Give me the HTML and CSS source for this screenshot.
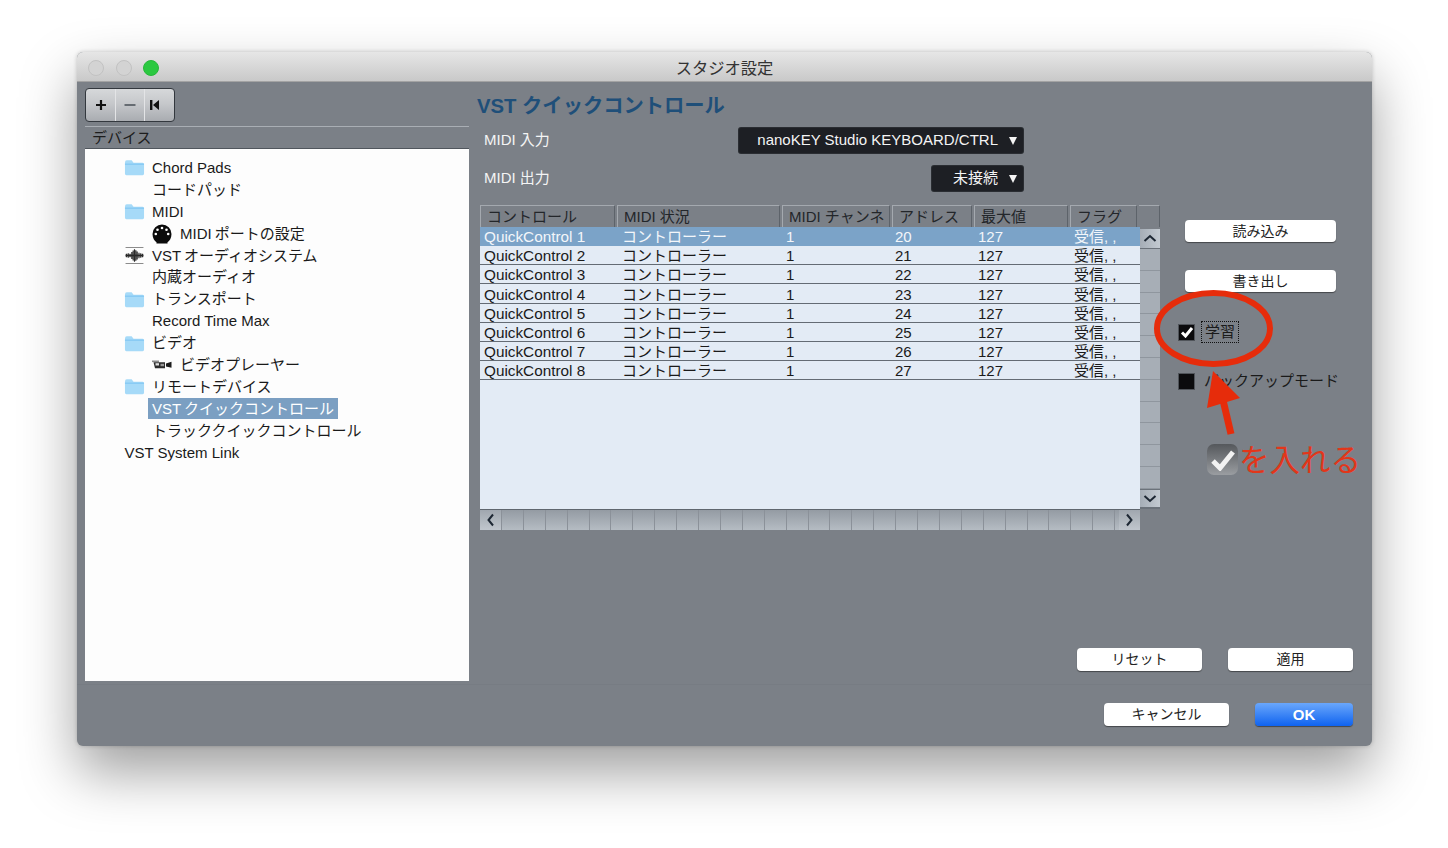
FILE: index.html
```html
<!DOCTYPE html>
<html lang="ja">
<head>
<meta charset="utf-8">
<title>スタジオ設定</title>
<link rel="stylesheet" href="styles.css">
</head>
<body>
<div class="window">
  <header class="titlebar">
    <div class="lights"><i class="light"></i><i class="light"></i><i class="light green"></i></div>
    <div class="wintitle">スタジオ設定</div>
  </header>
  <main class="content">
    <aside class="left">
      <div class="toolbar">
        <div class="tool first"><svg width="12" height="12" viewBox="0 0 12 12"><path d="M6 1v10M1 6h10" stroke="#111" stroke-width="2.2"/></svg></div>
        <div class="tool"><svg width="12" height="12" viewBox="0 0 12 12"><path d="M0.5 6h11" stroke="#666c72" stroke-width="2"/></svg></div>
        <div class="tool last"><svg width="11" height="12" viewBox="0 0 11 12"><path d="M1 1h2.4v10H1zM10 1v10L4 6z" fill="#111"/></svg></div>
      </div>
      <div class="treehead">デバイス</div>
      <div class="tree">
        <div class="node l1"><svg class="ficon" viewBox="0 0 22 17"><path d="M1 3.5Q1 1 3 1h5l2 2.4h9.5Q21 3.400 21 5v10q0 1.500-1.500 1.500h-17Q1 16.500 1 15z" fill="#a6daf8"/><path d="M1 5h20" stroke="#78c3f1" stroke-width="1"/></svg><span>Chord Pads</span></div>
        <div class="node l2"><span>コードパッド</span></div>
        <div class="node l1"><svg class="ficon" viewBox="0 0 22 17"><path d="M1 3.5Q1 1 3 1h5l2 2.4h9.5Q21 3.400 21 5v10q0 1.500-1.500 1.500h-17Q1 16.500 1 15z" fill="#a6daf8"/><path d="M1 5h20" stroke="#78c3f1" stroke-width="1"/></svg><span>MIDI</span></div>
        <div class="node l2"><svg class="iicon" viewBox="0 0 20 20"><path d="M10 .5a9.500 9.500 0 0 1 9.500 9.500c0 4-2 7-4 8.200V19.500h-11V18.200C2.500 17 .5 14 .5 10A9.500 9.500 0 0 1 10 .5z" fill="#0b0b0b"/><g fill="#fff"><circle cx="3.800" cy="10" r="1.300"/><circle cx="5.500" cy="5.800" r="1.300"/><circle cx="10" cy="4" r="1.300"/><circle cx="14.500" cy="5.800" r="1.300"/><circle cx="16.200" cy="10" r="1.300"/></g></svg><span class="tight">MIDI ポートの設定</span></div>
        <div class="node l1"><svg class="ficon" viewBox="0 0 20 19"><path d="M0 .5h20M0 18.500h20" stroke="#777" stroke-width="1"/><path d="M0 9.500h20" stroke="#222" stroke-width="2"/><path d="M1 7.500v4M3 7v5M5 7.500v4M7 5.500v8M8.500 4v11M10 2.500v14M11.500 3.500v12M13 5v9M15 6.500v6M17 7v5M19 7.500v4" stroke="#2a2a2a" stroke-width="1.300"/></svg><span class="tight">VST オーディオシステム</span></div>
        <div class="node l2"><span>内蔵オーディオ</span></div>
        <div class="node l1"><svg class="ficon" viewBox="0 0 22 17"><path d="M1 3.5Q1 1 3 1h5l2 2.4h9.5Q21 3.400 21 5v10q0 1.500-1.500 1.500h-17Q1 16.500 1 15z" fill="#a6daf8"/><path d="M1 5h20" stroke="#78c3f1" stroke-width="1"/></svg><span>トランスポート</span></div>
        <div class="node l2"><span>Record Time Max</span></div>
        <div class="node l1"><svg class="ficon" viewBox="0 0 22 17"><path d="M1 3.5Q1 1 3 1h5l2 2.4h9.5Q21 3.400 21 5v10q0 1.500-1.500 1.500h-17Q1 16.500 1 15z" fill="#a6daf8"/><path d="M1 5h20" stroke="#78c3f1" stroke-width="1"/></svg><span>ビデオ</span></div>
        <div class="node l2"><svg class="iicon cam" viewBox="0 0 20 9"><path d="M0 .5h7v1.600H0z" fill="#8a8a8a"/><path d="M1.500 2.200h11.500v6H3z" fill="#2b2b2b"/><path d="M3.500 3.200h3.500v2.300H3.500z" fill="#e0e0e0"/><path d="M8.500 3.800h3.500v2.400H8.500z" fill="#999"/><path d="M14 3.500L19.500 1.800v6L14 6.500z" fill="#1c1c1c"/></svg><span>ビデオプレーヤー</span></div>
        <div class="node l1"><svg class="ficon" viewBox="0 0 22 17"><path d="M1 3.5Q1 1 3 1h5l2 2.4h9.5Q21 3.400 21 5v10q0 1.500-1.500 1.500h-17Q1 16.500 1 15z" fill="#a6daf8"/><path d="M1 5h20" stroke="#78c3f1" stroke-width="1"/></svg><span>リモートデバイス</span></div>
        <div class="node l2"><span class="sel tight">VST クイックコントロール</span></div>
        <div class="node l2"><span>トラッククイックコントロール</span></div>
        <div class="node l0"><span>VST System Link</span></div>
      </div>
    </aside>
    <section class="right">
      <h1 class="heading">VST クイックコントロール</h1>
      <div class="midirow first"><span class="mlabel">MIDI 入力</span><div class="drop wide"><span>nanoKEY Studio KEYBOARD/CTRL</span><i class="tri"></i></div></div>
      <div class="midirow"><span class="mlabel">MIDI 出力</span><div class="drop"><span>未接続</span><i class="tri"></i></div></div>
      <div class="workarea">
        <div class="gridwrap">
          <div class="thead">
            <div class="th c1">コントロール</div><div class="th c2">MIDI 状況</div><div class="th c3">MIDI チャンネ</div><div class="th c4">アドレス</div><div class="th c5">最大値</div><div class="th c6">フラグ</div><div class="th c7"></div>
          </div>
          <div class="gridbody">
            <div class="rows">
              <div class="row active"><span class="c1">QuickControl 1</span><span class="c2">コントローラー</span><span class="c3">1</span><span class="c4">20</span><span class="c5">127</span><span class="c6">受信, ,</span></div>
              <div class="row"><span class="c1">QuickControl 2</span><span class="c2">コントローラー</span><span class="c3">1</span><span class="c4">21</span><span class="c5">127</span><span class="c6">受信, ,</span></div>
              <div class="row"><span class="c1">QuickControl 3</span><span class="c2">コントローラー</span><span class="c3">1</span><span class="c4">22</span><span class="c5">127</span><span class="c6">受信, ,</span></div>
              <div class="row"><span class="c1">QuickControl 4</span><span class="c2">コントローラー</span><span class="c3">1</span><span class="c4">23</span><span class="c5">127</span><span class="c6">受信, ,</span></div>
              <div class="row"><span class="c1">QuickControl 5</span><span class="c2">コントローラー</span><span class="c3">1</span><span class="c4">24</span><span class="c5">127</span><span class="c6">受信, ,</span></div>
              <div class="row"><span class="c1">QuickControl 6</span><span class="c2">コントローラー</span><span class="c3">1</span><span class="c4">25</span><span class="c5">127</span><span class="c6">受信, ,</span></div>
              <div class="row"><span class="c1">QuickControl 7</span><span class="c2">コントローラー</span><span class="c3">1</span><span class="c4">26</span><span class="c5">127</span><span class="c6">受信, ,</span></div>
              <div class="row"><span class="c1">QuickControl 8</span><span class="c2">コントローラー</span><span class="c3">1</span><span class="c4">27</span><span class="c5">127</span><span class="c6">受信, ,</span></div>
            </div>
            <div class="vscroll">
              <div class="arrow"><svg width="14" height="9" viewBox="0 0 14 9"><path d="M1.500 7L7 2l5.500 5" fill="none" stroke="#1d2733" stroke-width="2"/></svg></div>
              <div class="vtrack"></div>
              <div class="arrow"><svg width="14" height="9" viewBox="0 0 14 9"><path d="M1.500 2L7 7l5.500-5" fill="none" stroke="#1d2733" stroke-width="2"/></svg></div>
            </div>
          </div>
          <div class="hscroll">
            <div class="harrow"><svg width="9" height="14" viewBox="0 0 9 14"><path d="M7 1.500L2.500 7 7 12.500" fill="none" stroke="#1d2733" stroke-width="2"/></svg></div>
            <div class="htrack"></div>
            <div class="harrow"><svg width="9" height="14" viewBox="0 0 9 14"><path d="M2 1.500L6.500 7 2 12.500" fill="none" stroke="#1d2733" stroke-width="2"/></svg></div>
          </div>
        </div>
        <div class="side">
          <button class="btn sidebtn">読み込み</button>
          <button class="btn sidebtn second">書き出し</button>
          <div class="check one"><i class="box"><svg width="14" height="12" viewBox="0 0 14 12"><path d="M2 6.500L5.500 10 12 2" fill="none" stroke="#fff" stroke-width="3"/></svg></i><span class="focus">学習</span></div>
          <div class="check two"><i class="box"></i><span class="plain">バックアップモード</span></div>
        </div>
      </div>
      <div class="actions"><button class="btn act">リセット</button><button class="btn act">適用</button></div>
    </section>
  </main>
  <footer class="footer">
    <button class="btn act">キャンセル</button><button class="btn ok">OK</button>
  </footer>
  <svg class="overlay" width="1295" height="694" viewBox="77 52 1295 694">
    <ellipse cx="1213.500" cy="328.500" rx="56.500" ry="35.500" fill="none" stroke="#e62c0b" stroke-width="6"/>
    <path d="M1231 434L1223 400" stroke="#e62c0b" stroke-width="7"/>
    <path d="M1213 371L1240 398L1207 408z" fill="#e62c0b"/>
  </svg>
  <div class="note"><i class="bigcheck"><svg width="26" height="22" viewBox="0 0 26 22"><path d="M3 12l7 7L23 3" fill="none" stroke="#f2f2f2" stroke-width="5"/></svg></i><span>を入れる</span></div>
</div>
</body>
</html>
```
FILE: styles.css
```css
* { box-sizing: border-box; }
html, body { margin: 0; padding: 0; background: #fff; height: 848px; overflow: hidden; }
body { padding: 52px 0 0 77px; font-family: "Liberation Sans", "Noto Sans CJK JP", sans-serif; font-size: 15px; line-height: 20px; color: #1a1a1a; }
.window { position: relative; width: 1295px; height: 694px; background: #7b8087; border-radius: 6px; box-shadow: 0 26px 55px rgba(0,0,0,.38), 0 0 4px rgba(0,0,0,.2); display: flex; flex-direction: column; overflow: visible; }
.titlebar { position: relative; height: 30px; flex: none; background: linear-gradient(#e6e6e6, #c9c9c9); border-radius: 6px 6px 0 0; border-bottom: 1px solid #a3a3a3; display: flex; align-items: center; justify-content: center; }
.lights { position: absolute; left: 11px; top: 8px; display: flex; gap: 11.500px; }
.light { width: 16px; height: 16px; border-radius: 50%; background: #d3d3d3; border: 1px solid #c2c2c2; display: block; }
.light.green { background: #2bc840; border-color: #27b83a; }
.wintitle { font-size: 16.3px; color: #333; padding-top: 2px; }
.content { display: flex; height: 603px; flex: none; border-bottom: 1px solid #777c83; }
.left { width: 392px; flex: none; padding: 6px 0 0 8px; display: flex; flex-direction: column; }
.toolbar { width: 90px; height: 34px; display: flex; border: 1px solid #33383e; border-radius: 4px; background: linear-gradient(#d6d8da, #c6c8cb 45%, #a9acb1); }
.tool { width: 29px; flex: none; display: flex; align-items: center; justify-content: center; border-left: 1px solid #e3e4e6; }
.tool.first { width: 29px; padding-left: 0; border-left: 0; }
.tool.last { padding-right: 9px; }
.treehead { margin-top: 4px; height: 23px; line-height: 21px; padding-left: 7px; border-top: 1px solid #a9aeb4; border-bottom: 1px solid #50565d; color: #1d1d1d; }
.tree { width: 384px; height: 532px; background: #fdfdfd; padding-top: 8px; }
.node { height: 21.9px; display: flex; align-items: center; white-space: nowrap; }
.node.l0 { padding-left: 39.500px; }
.node.l1 { padding-left: 39px; }
.node.l2 { padding-left: 67px; }
.tight { word-spacing: -1px; }
.ficon { width: 21px; height: 17px; margin-right: 7px; flex: none; }
.iicon { width: 20px; height: 20px; margin-right: 8px; flex: none; }
.iicon.cam { height: 9px; }
.sel { background: #7b9fc2; color: #fff; height: 21px; line-height: 21px; padding: 0 4px; margin-left: -4px; }
.right { flex: 1; min-width: 0; display: flex; flex-direction: column; padding: 0 19px 13px 8px; position: relative; }
.heading { margin: 10px 0 0; height: 28px; font-size: 20.3px; line-height: 28px; font-weight: 700; color: #1f4f79; white-space: nowrap; }
.midirow { display: flex; justify-content: space-between; align-items: center; height: 26px; padding: 0 8px 0 7px; margin-top: 12px; width: 554px; }
.midirow.first { margin-top: 7px; }
.mlabel { color: #f4f4f4; }
.drop { height: 25px; background: #1d1f24; border-radius: 2px; color: #f4f4f4; display: flex; align-items: center; padding: 0 6px 0 21px; box-shadow: 0 0 0 1px #2a2d32; }
.drop.wide { padding-left: 18px; }
.tri { display: block; width: 0; height: 0; margin-left: 11px; margin-top: 2px; border-left: 4px solid transparent; border-right: 4px solid transparent; border-top: 8px solid #f4f4f4; }
.workarea { display: flex; margin-top: 14px; height: 325px; }
.gridwrap { width: 680px; margin-left: 3px; flex: none; }
.thead { display: flex; height: 22px; }
.th { border-top: 1px solid #a4a9af; border-left: 1px solid #a4a9af; border-right: 1px solid #5d636a; padding-left: 6px; color: #23262a; line-height: 21px; white-space: nowrap; flex: none; margin-right: 2px; }
.th.c1 { width: 135px; } .th.c2 { width: 163px; } .th.c3 { width: 108px; } .th.c4 { width: 80px; } .th.c5 { width: 94px; } .th.c6 { width: 67px; }
.th.c7 { width: 21px; margin: 0; border-left: 0; border-right-color: #5d636a; padding: 0; }
.gridbody { display: flex; height: 282px; }
.rows { width: 660px; background: #e3ebf5; flex: none; }
.row { height: 19.15px; padding-top: 2px; display: flex; align-items: center; border-bottom: 1px solid #646b74; line-height: 18px; white-space: nowrap; }
.row.active { background: #7ba3c8; color: #f3f6fa; border-bottom-color: #7ba3c8; }
.row span { display: block; flex: none; }
.row .c1 { width: 142px; padding-left: 4px; font-size: 15.3px; } .row .c2 { width: 164px; } .row .c3 { width: 109px; } .row .c4 { width: 83px; } .row .c5 { width: 96px; } .row .c6 { width: 66px; }
.vscroll { width: 20px; display: flex; flex-direction: column; flex: none; }
.arrow { height: 20px; flex: none; background: linear-gradient(90deg, #a5adb6, #c3cad1); display: flex; align-items: center; justify-content: center; border-bottom: 1px solid #6b727a; }
.arrow:first-child { margin-top: 2px; }
.arrow:last-child { border-top: 1px solid #6b727a; border-bottom: 2px solid #6b727a; }
.vtrack { flex: 1; background: repeating-linear-gradient(#a7aeb6 0, #a7aeb6 20.8px, #8f969e 20.8px, #8f969e 21.8px), #a7aeb6; }
.hscroll { display: flex; height: 21px; width: 660px; border-top: 1px solid #5f666e; }
.harrow { width: 21px; flex: none; background: linear-gradient(#a0a7af, #c0c6cd); display: flex; align-items: center; justify-content: center; }
.htrack { flex: 1; background: repeating-linear-gradient(90deg, #8b9199 0, #8b9199 1px, transparent 1px, transparent 21.9px), linear-gradient(#949ba3, #b5bcc3); }
.side { position: relative; flex: 1; padding-left: 25px; display: flex; flex-direction: column; align-items: flex-start; padding-top: 15px; }
.btn { display: block; padding: 0; border: 0; font: inherit; font-size: 14px; height: 23px; background: #fff; color: #222; border-radius: 4px; box-shadow: 0 1px 1px rgba(0,0,0,.45); line-height: 23px; text-align: center; }
.sidebtn { width: 151px; height: 22px; line-height: 22px; }
.sidebtn.second { margin-top: 28px; }
.check { display: flex; align-items: center; white-space: nowrap; }
.check.one { margin-top: 31px; margin-left: -7px; height: 18px; }
.check.two { margin-top: 31px; margin-left: -7px; height: 18px; }
.box { width: 17px; height: 17px; display: flex; align-items: center; justify-content: center; background: #0b0b0d; border: 1px solid #50545a; }
.focus { margin-left: 6px; padding: 0 3px; border: 1px dotted #111; height: 22px; line-height: 20px; }
.plain { margin-left: 9px; }
.actions { margin-top: auto; display: flex; justify-content: flex-end; gap: 26px; }
.act { width: 125px; }
.footer { flex: 1; display: flex; justify-content: flex-end; align-items: flex-start; gap: 26px; padding: 18px 19px 0 0; }
.ok { width: 98px; background: linear-gradient(#6aa7fb, #0f63f0); color: #fff; font-size: 15px; font-weight: 700; }
.overlay { position: absolute; left: 0; top: 0; pointer-events: none; }
.note { position: absolute; left: 1130px; top: 392px; display: flex; align-items: center; color: #e2361a; font-size: 30.5px; line-height: 30px; white-space: nowrap; }
.bigcheck { width: 31px; height: 31px; margin-right: 1px; border-radius: 7px; background: linear-gradient(#55585c, #9a9da1); display: flex; align-items: center; justify-content: center; }
```
